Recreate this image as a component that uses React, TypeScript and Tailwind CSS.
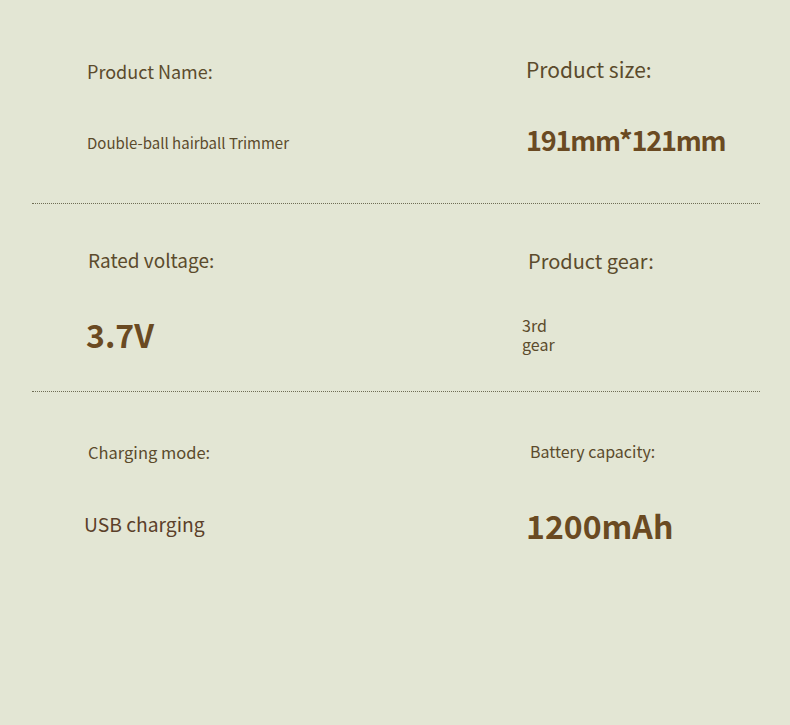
const font = { fontFamily: '"Noto Sans CJK SC", "Noto Sans", sans-serif' };

function Divider() {
  return <div className="mx-[32px] w-[728px] border-t border-dotted border-[#6f6d55]" />;
}

export default function App() {
  return (
    <div className="h-[725px] w-[790px] overflow-hidden bg-[#e3e6d4] text-[#5a4a2e]" style={font}>
      {/* row 1 */}
      <div className="flex h-[203px]">
        <div className="w-[526px] shrink-0 pl-[87px] pt-[59px]">
          <p className="text-[18px] leading-[24px] text-[#5b4b2c]">Product Name:</p>
          <p className="mt-[50px] text-[15px] leading-[20px] text-[#5b4b2c]">Double-ball hairball Trimmer</p>
        </div>
        <div className="pt-[56px]">
          <p className="text-[21px] leading-[26px] text-[#5b4b2c]">Product size:</p>
          <p className="mt-[41px] text-[27px] font-bold leading-[34px] tracking-[-1.2px] text-[#6a4a22]">191mm*121mm</p>
        </div>
      </div>
      <Divider />
      {/* row 2 */}
      <div className="flex h-[187px]">
        <div className="w-[526px] shrink-0 pl-[88px] pt-[43px]">
          <p className="text-[19px] leading-[26px] text-[#5b4b2c]">Rated voltage:</p>
          <p className="ml-[-2px] mt-[40px] text-[32px] font-bold leading-[42px] text-[#6a4a22]">3.7V</p>
        </div>
        <div className="pt-[44px]">
          <p className="pl-[2px] text-[20px] leading-[26px] text-[#5b4b2c]">Product gear:</p>
          <p className="ml-[-4px] mt-[42px] w-[40px] text-[16px] leading-[19px] text-[#5b4b2c]">3rd gear</p>
        </div>
      </div>
      <Divider />
      {/* row 3 */}
      <div className="flex">
        <div className="w-[526px] shrink-0 pl-[88px] pt-[49px]">
          <p className="text-[16.5px] leading-[22px] text-[#5b4b2c]">Charging mode:</p>
          <p className="ml-[-4px] mt-[48px] text-[19.3px] leading-[26px] text-[#5b3f2a]">USB charging</p>
        </div>
        <div className="pt-[48px]">
          <p className="pl-[4px] text-[16px] leading-[22px] text-[#5b4b2c]">Battery capacity:</p>
          <p className="mt-[42px] text-[32px] font-bold leading-[42px] text-[#6a4a22]">1200mAh</p>
        </div>
      </div>
    </div>
  );
}
